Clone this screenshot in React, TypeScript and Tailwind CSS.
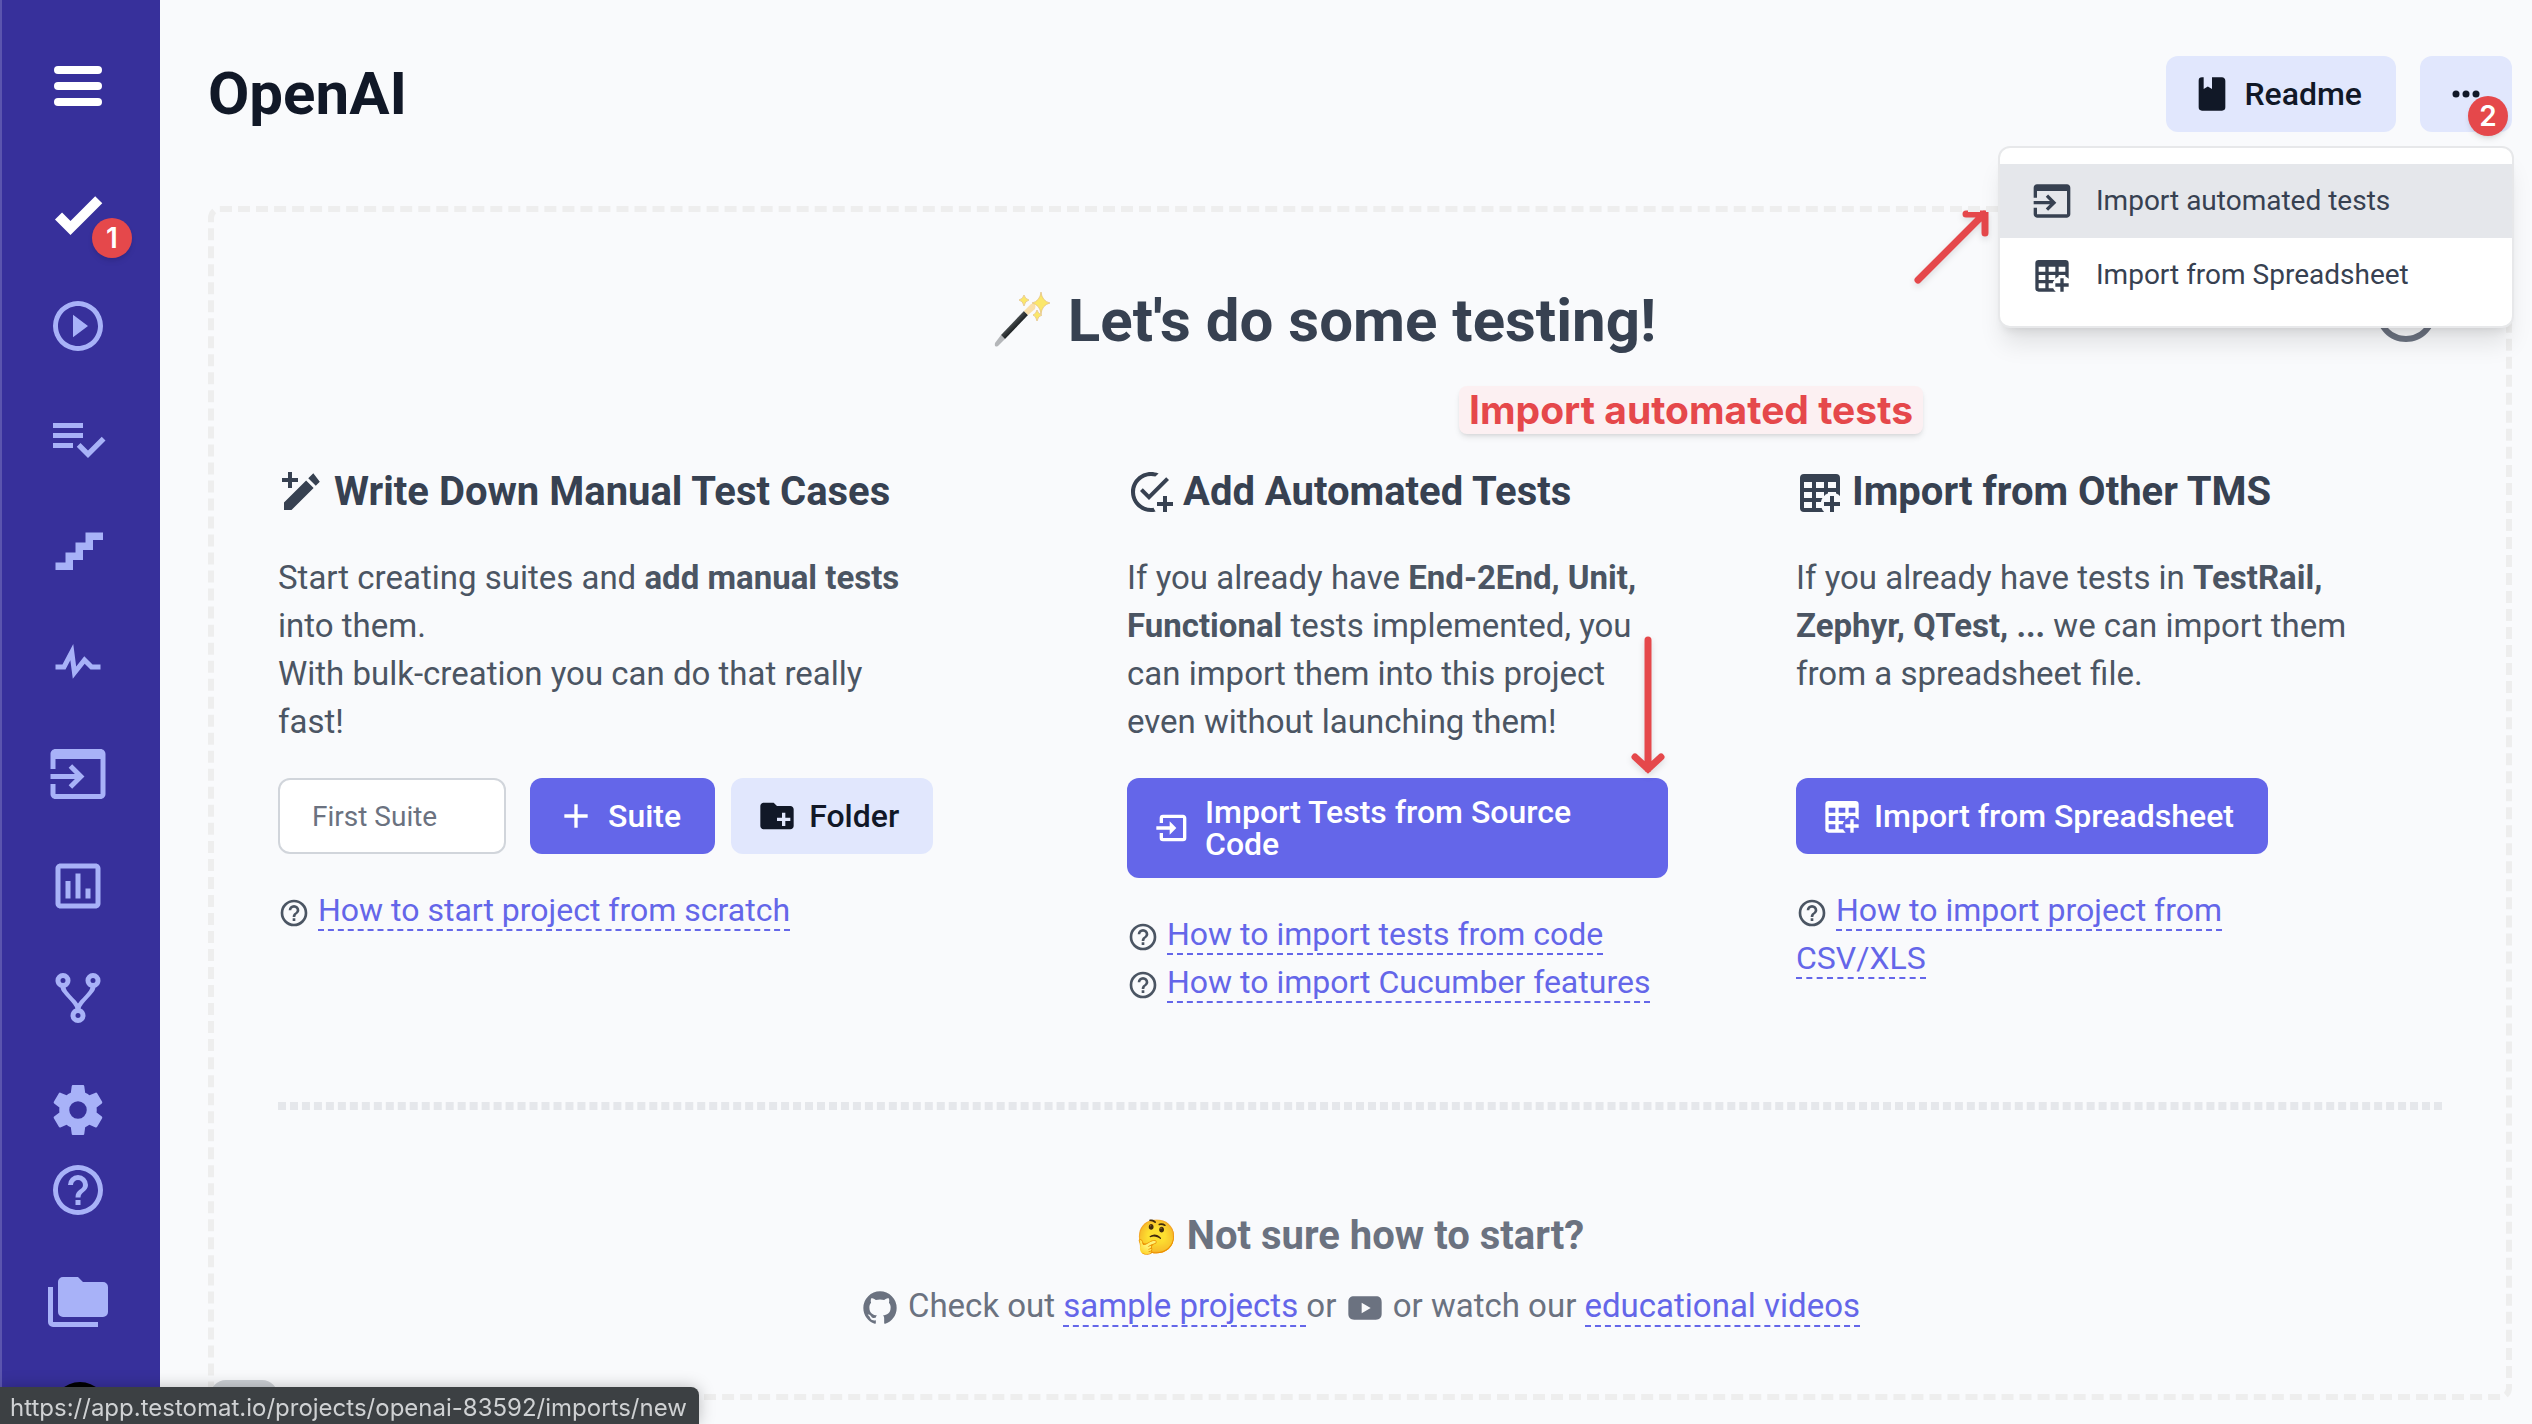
import { useId, type ReactNode } from "react";

const PATHS = {
  check: "M9,20.42L2.79,14.21L5.62,11.38L9,14.77L18.88,4.88L21.71,7.71L9,20.42Z",
  play: "M12,20C7.59,20 4,16.41 4,12C4,7.59 7.59,4 12,4C16.41,4 20,7.59 20,12C20,16.41 16.41,20 12,20M12,2A10,10 0 0,0 2,12A10,10 0 0,0 12,22A10,10 0 0,0 22,12A10,10 0 0,0 12,2M10,16.5L16,12L10,7.5V16.5Z",
  playlist: "M14 10H2V12H14V10M14 6H2V8H14V6M2 16H10V14H2V16M21.5 11.5L23 13L16 20L11.5 15.5L13 14L16 17L21.5 11.5Z",
  stairs: "M15,5V9H11V13H7V17H3V20H10V16H14V12H18V8H22V5H15Z",
  pulse: "M3,13H5.79L10.1,4.79L11.28,13.75L14.5,9.66L17.83,13H21V15H17L14.67,12.67L9.92,18.73L8.94,11.31L7,15H3V13Z",
  appImport: "M1 12H10.76L8.26 9.5L9.67 8.08L14.59 13L9.67 17.92L8.26 16.5L10.76 14H1V12M21 2C22.1 2 23 2.9 23 4V20C23 21.1 22.1 22 21 22H3C1.9 22 1 21.1 1 20V16H3V20H21V6H3V10H1V4C1 2.9 1.9 2 3 2H21Z",
  chart: "M9 17H7V10H9V17M13 17H11V7H13V17M17 17H15V13H17V17M19 19H5V5H19V19M19 3H5C3.9 3 3 3.9 3 5V19C3 20.1 3.9 21 5 21H19C20.1 21 21 20.1 21 19V5C21 3.9 20.1 3 19 3Z",
  fork: "M6,2A3,3 0 0,1 9,5C9,6.28 8.19,7.38 7.06,7.81C7.15,8.27 7.39,8.83 8,9.63C9,10.92 11,12.83 12,14.17C13,12.83 15,10.92 16,9.63C16.61,8.83 16.85,8.27 16.94,7.81C15.81,7.38 15,6.28 15,5A3,3 0 0,1 18,2A3,3 0 0,1 21,5C21,6.32 20.14,7.45 18.95,7.85C18.87,8.37 18.64,9 18,9.83C17,11.17 15,13.08 14,14.38C13.39,15.17 13.15,15.73 13.06,16.19C14.19,16.62 15,17.72 15,19A3,3 0 0,1 12,22A3,3 0 0,1 9,19C9,17.72 9.81,16.62 10.94,16.19C10.85,15.73 10.61,15.17 10,14.38C9,13.08 7,11.17 6,9.83C5.36,9 5.13,8.37 5.05,7.85C3.86,7.45 3,6.32 3,5A3,3 0 0,1 6,2M6,4A1,1 0 0,0 5,5A1,1 0 0,0 6,6A1,1 0 0,0 7,5A1,1 0 0,0 6,4M18,4A1,1 0 0,0 17,5A1,1 0 0,0 18,6A1,1 0 0,0 19,5A1,1 0 0,0 18,4M12,18A1,1 0 0,0 11,19A1,1 0 0,0 12,20A1,1 0 0,0 13,19A1,1 0 0,0 12,18Z",
  cog: "M12,15.5A3.5,3.5 0 0,1 8.5,12A3.5,3.5 0 0,1 12,8.5A3.5,3.5 0 0,1 15.5,12A3.5,3.5 0 0,1 12,15.5M19.43,12.97C19.47,12.65 19.5,12.33 19.5,12C19.5,11.67 19.47,11.34 19.43,11L21.54,9.37C21.73,9.22 21.78,8.95 21.66,8.73L19.66,5.27C19.54,5.05 19.27,4.96 19.05,5.05L16.56,6.05C16.04,5.66 15.5,5.32 14.87,5.07L14.5,2.42C14.46,2.18 14.25,2 14,2H10C9.75,2 9.54,2.18 9.5,2.42L9.13,5.07C8.5,5.32 7.96,5.66 7.44,6.05L4.95,5.05C4.73,4.96 4.46,5.05 4.34,5.27L2.34,8.73C2.21,8.95 2.27,9.22 2.46,9.37L4.57,11C4.53,11.34 4.5,11.67 4.5,12C4.5,12.33 4.53,12.65 4.57,12.97L2.46,14.63C2.27,14.78 2.21,15.05 2.34,15.27L4.34,18.73C4.46,18.95 4.73,19.03 4.95,18.95L7.44,17.94C7.96,18.34 8.5,18.68 9.13,18.93L9.5,21.58C9.54,21.82 9.75,22 10,22H14C14.25,22 14.46,21.82 14.5,21.58L14.87,18.93C15.5,18.67 16.04,18.34 16.56,17.94L19.05,18.95C19.27,19.03 19.54,18.95 19.66,18.73L21.66,15.27C21.78,15.05 21.73,14.78 21.54,14.63L19.43,12.97Z",
  help: "M11,18H13V16H11V18M12,2A10,10 0 0,0 2,12A10,10 0 0,0 12,22A10,10 0 0,0 22,12A10,10 0 0,0 12,2M12,20C7.59,20 4,16.41 4,12C4,7.59 7.59,4 12,4C16.41,4 20,7.59 20,12C20,16.41 16.41,20 12,20M12,6A4,4 0 0,0 8,10H10A2,2 0 0,1 12,8A2,2 0 0,1 14,10C14,12 11,11.75 11,15H13C13,12.75 16,12.5 16,10A4,4 0 0,0 12,6Z",
  folders: "M22,4H14L12,2H6A2,2 0 0,0 4,4V16A2,2 0 0,0 6,18H22A2,2 0 0,0 24,16V6A2,2 0 0,0 22,4M2,6H0V20A2,2 0 0,0 2,22H20V20H2V6Z",
  book: "M18,22A2,2 0 0,0 20,20V4C20,2.89 19.1,2 18,2H12V9L9.5,7.5L7,9V2H6A2,2 0 0,0 4,4V20A2,2 0 0,0 6,22H18Z",
  close: "M12,20C7.59,20 4,16.41 4,12C4,7.59 7.59,4 12,4C16.41,4 20,7.59 20,12C20,16.41 16.41,20 12,20M12,2C6.47,2 2,6.47 2,12C2,17.53 6.47,22 12,22C17.53,22 22,17.53 22,12C22,6.47 17.53,2 12,2M14.59,8L12,10.59L9.41,8L8,9.41L10.59,12L8,14.59L9.41,16L12,13.41L14.59,16L16,14.59L13.41,12L16,9.41L14.59,8Z",
  pencilPlus: "M3 21V17.25L14.06 6.19L17.81 9.94L6.75 21H3ZM20.9 6.85L17.66 2.6L15.13 5.12L18.88 8.87L20.9 6.85ZM10 5H7V2H5V5H2V7H5V10H7V7H10V5Z",
  checkPlus: "M14.3 21.7C13.6 21.9 12.8 22 12 22C6.5 22 2 17.5 2 12S6.5 2 12 2C13.3 2 14.6 2.3 15.8 2.7L14.2 4.3C13.5 4.1 12.8 4 12 4C7.6 4 4 7.6 4 12S7.6 20 12 20C12.4 20 12.9 20 13.3 19.9C13.5 20.6 13.9 21.2 14.3 21.7M7.9 10.1L6.5 11.5L11 16L21 6L19.6 4.6L11 13.2L7.9 10.1M18 14V17H15V19H18V22H20V19H23V17H20V14H18Z",
  plus: "M19,13H13V19H11V13H5V11H11V5H13V11H19V13Z",
  folderPlus: "M4 20C2.9 20 2 19.1 2 18V6C2 4.89 2.89 4 4 4H10L12 6H20C21.1 6 22 6.89 22 8V18C22 19.1 21.1 20 20 20H4M15 10V13H12V15H15V18H17V15H20V13H17V10H15Z",
  enter: "M14,12L10,8V11H2V13H10V16M20,18V6C20,4.89 19.1,4 18,4H6A2,2 0 0,0 4,6V9H6V6H18V18H6V15H4V18A2,2 0 0,0 6,20H18A2,2 0 0,0 20,18Z",
  github: "M12,2A10,10 0 0,0 2,12C2,16.42 4.87,20.17 8.84,21.5C9.34,21.58 9.5,21.27 9.5,21C9.5,20.77 9.5,20.14 9.5,19.31C6.73,19.91 6.14,17.97 6.14,17.97C5.68,16.81 5.03,16.5 5.03,16.5C4.12,15.88 5.1,15.9 5.1,15.9C6.1,15.97 6.63,16.93 6.63,16.93C7.5,18.45 8.97,18 9.54,17.76C9.63,17.11 9.89,16.67 10.17,16.42C7.95,16.17 5.62,15.31 5.62,11.5C5.62,10.39 6,9.5 6.65,8.79C6.55,8.54 6.2,7.5 6.75,6.15C6.75,6.15 7.59,5.88 9.5,7.17C10.29,6.95 11.15,6.84 12,6.84C12.85,6.84 13.71,6.95 14.5,7.17C16.41,5.88 17.25,6.15 17.25,6.15C17.8,7.5 17.45,8.54 17.35,8.79C18,9.5 18.38,10.39 18.38,11.5C18.38,15.32 16.04,16.16 13.81,16.41C14.17,16.72 14.5,17.33 14.5,18.26C14.5,19.6 14.5,20.68 14.5,21C14.5,21.27 14.66,21.59 15.17,21.5C19.14,20.16 22,16.42 22,12A10,10 0 0,0 12,2Z",
  youtube: "M10,15.2L15.4,12L10,8.8V15.2M22,8.5V15.5C22,17.8 20.8,19 18.5,19H5.5C3.2,19 2,17.8 2,15.5V8.5C2,6.2 3.2,5 5.5,5H18.5C20.8,5 22,6.2 22,8.5Z",
};

function Icon({ name, className }: { name: keyof typeof PATHS; className: string }) {
  return (
    <svg viewBox="0 0 24 24" fill="currentColor" fillRule="evenodd" aria-hidden="true" className={className}>
      <path d={PATHS[name]} />
    </svg>
  );
}

function TablePlus({ className }: { className: string }) {
  const id = useId();
  return (
    <svg viewBox="0 0 24 24" fill="currentColor" aria-hidden="true" className={className}>
      <mask id={id}>
        <rect width="24" height="24" fill="white" />
        <circle cx="18" cy="18" r="5.6" fill="black" />
      </mask>
      <path
        mask={`url(#${id})`}
        fillRule="evenodd"
        d="M4,3H20A2,2 0 0,1 22,5V20A2,2 0 0,1 20,22H4A2,2 0 0,1 2,20V5A2,2 0 0,1 4,3M4,7V10H8V7H4M10,7V10H14V7H10M20,10V7H16V10H20M4,12V15H8V12H4M4,20H8V17H4V20M10,12V15H14V12H10M10,20H14V17H10V20M20,20V17H16V20H20M20,12H16V15H20V12Z"
      />
      <path d="M17 14H19V17H22V19H19V22H17V19H14V17H17V14Z" />
    </svg>
  );
}

function Wand() {
  const id = useId();
  return (
    <svg viewBox="0 0 60 60" aria-hidden="true" className="size-[60px] shrink-0">
      <defs>
        <linearGradient id={id} x1="0" y1="0" x2="1" y2="1">
          <stop offset="0.35" stopColor="#5b6062" />
          <stop offset="0.6" stopColor="#15191b" />
        </linearGradient>
      </defs>
      <path d="M3 52L9 44L13 48L6 55Q2 57 3 52Z" fill="#b4b6b9" />
      <path d="M9 44L32 20L36 24L13 48Z" fill={`url(#${id})`} />
      <path d="M32 20L39 13Q45 12 43 18L36 24Z" fill="#fadfa9" />
      <g fill="#fbe76a" stroke="#e3bd7d" strokeWidth="0.7">
        <path d="M49 1Q50 10 58 12Q50 14 49 23Q48 14 40 12Q48 10 49 1Z" />
        <path d="M32 4Q33 8 37 9Q33 10 32 15Q31 10 27 9Q31 8 32 4Z" />
        <path d="M45 19Q46 23 50 24Q46 25 45 30Q44 25 41 24Q44 23 45 19Z" />
      </g>
    </svg>
  );
}

function Badge({ children, className }: { children: ReactNode; className: string }) {
  return (
    <span className={`absolute flex size-10 items-center justify-center rounded-full bg-[#e5484b] font-['Inter',sans-serif] text-[28px] leading-none font-semibold text-white shadow-md ${className}`}>
      {children}
    </span>
  );
}

function Button({ icon, tone, children }: { icon: ReactNode; tone: "solid" | "soft"; children: ReactNode }) {
  const color = tone === "solid" ? "bg-[#6466e9] text-white" : "bg-[#e1e7fd] text-[#111827]";
  return (
    <button type="button" className={`flex min-h-[76px] items-center gap-3 rounded-xl py-[18px] pr-[34px] pl-[26px] text-left text-[32px] leading-8 font-medium ${color}`}>
      {icon}
      <span>{children}</span>
    </button>
  );
}

function Link({ children }: { children: ReactNode }) {
  return (
    <a href="#" className="border-b-2 border-dashed border-[#6466e9] text-[#6466e9]">
      {children}
    </a>
  );
}

function HelpLink({ children }: { children: ReactNode }) {
  return (
    <p className="text-[32px]">
      <Icon name="help" className="mr-2 inline size-8 align-middle" />
      <Link>{children}</Link>
    </p>
  );
}

function Column({ icon, title, text, action, className, children }: { icon: ReactNode; title: string; text: ReactNode; action: ReactNode; className: string; children: ReactNode }) {
  return (
    <section className={`text-[33px] leading-[48px] text-[#4b5563] ${className}`}>
      <h3 className="flex items-center gap-2 text-[40px] leading-[60px] font-bold whitespace-nowrap text-[#374151]">
        {icon}
        {title}
      </h3>
      <p className="mt-8 min-h-48">{text}</p>
      <div className="mt-8 flex">{action}</div>
      <div className="mt-8">{children}</div>
    </section>
  );
}

const NAV: { name: keyof typeof PATHS; label: string }[] = [
  { name: "play", label: "Runs" },
  { name: "playlist", label: "Plans" },
  { name: "stairs", label: "Steps" },
  { name: "pulse", label: "Pulse" },
  { name: "appImport", label: "Imports" },
  { name: "chart", label: "Analytics" },
  { name: "fork", label: "Branches" },
  { name: "cog", label: "Settings" },
];

function Sidebar() {
  return (
    <aside className="sticky top-0 flex h-screen w-40 shrink-0 flex-col items-center overflow-hidden border-l-2 border-[#5b55ae] bg-[#37309b] pt-14 pr-1.5 text-[#a8b2f8]">
      <button type="button" aria-label="Menu" className="text-white">
        <svg viewBox="0 0 60 60" fill="currentColor" aria-hidden="true" className="size-[60px]">
          <rect x="6" y="10" width="48" height="8" rx="4" />
          <rect x="6" y="26" width="48" height="8" rx="4" />
          <rect x="6" y="42" width="48" height="8" rx="4" />
        </svg>
      </button>
      <nav className="mt-[68px] flex shrink-0 flex-col gap-[52px]">
        <a href="#" aria-label="Tests" className="relative text-white">
          <Icon name="check" className="size-[60px]" />
          <Badge className="top-[34px] left-11">1</Badge>
        </a>
        {NAV.map((item) => (
          <a key={item.name} href="#" aria-label={item.label}>
            <Icon name={item.name} className="size-[60px]" />
          </a>
        ))}
      </nav>
      <a href="#" aria-label="Help" className="mt-5">
        <Icon name="help" className="size-[60px]" />
      </a>
      <a href="#" aria-label="Projects" className="mt-[52px]">
        <Icon name="folders" className="size-[60px]" />
      </a>
      <span className="mt-[50px] ml-1 size-14 shrink-0 rounded-full bg-black" />
    </aside>
  );
}

function MoreMenu() {
  return (
    <div className="relative">
      <button type="button" aria-label="More" className="flex h-[76px] w-[92px] items-center justify-center rounded-xl bg-[#e1e7fd] text-[#111827]">
        <svg viewBox="0 0 28 8" fill="currentColor" aria-hidden="true" className="h-2 w-7">
          <circle cx="4" cy="4" r="3.5" />
          <circle cx="14" cy="4" r="3.5" />
          <circle cx="24" cy="4" r="3.5" />
        </svg>
      </button>
      <Badge className="right-1 -bottom-1">2</Badge>
      <div className="absolute top-[90px] -right-0.5 z-10 w-[516px] rounded-xl border-2 border-[#e7e8ea] bg-white pt-4 pb-3.5 text-[28px] text-[#374151] shadow-xl">
        <a href="#" className="flex h-[74px] items-center gap-6 bg-[#e5e7eb] px-8">
          <Icon name="appImport" className="size-10" />
          Import automated tests
        </a>
        <a href="#" className="flex h-[74px] items-center gap-6 px-8">
          <TablePlus className="size-10" />
          Import from Spreadsheet
        </a>
      </div>
      <svg viewBox="0 0 90 90" fill="none" stroke="#e5484b" strokeWidth="7" strokeLinecap="round" strokeLinejoin="miter" aria-hidden="true" className="absolute top-[148px] right-[517px] size-[90px] drop-shadow-md">
        <path d="M13 76L79 10M61 10H80V29" />
      </svg>
    </div>
  );
}

export default function App() {
  return (
    <div className="flex min-h-screen bg-[#f9fafc] font-['Roboto',sans-serif]">
      <Sidebar />
      <main className="min-w-0 flex-1 pt-14 pr-5 pb-6 pl-12">
        <header className="flex items-center gap-6">
          <h1 className="flex-1 text-[60px] leading-[76px] font-bold text-[#111827]">OpenAI</h1>
          <Button tone="soft" icon={<Icon name="book" className="size-10 shrink-0" />}>
            Readme
          </Button>
          <MoreMenu />
        </header>

        <div className="relative mt-[74px] rounded-xl border-6 border-dashed border-[#eeeeee] p-16">
          <div className="flex items-start">
            <h2 className="flex flex-1 items-center justify-center gap-4 text-[60px] leading-[90px] font-bold text-[#374151]">
              <Wand />
              Let's do some testing!
            </h2>
            <button type="button" aria-label="Close" className="text-[#6b7280]">
              <Icon name="close" className="size-[72px]" />
            </button>
          </div>

          <div className="absolute top-[174px] right-[583px] rounded-lg bg-[#fcf0f2] px-2.5 font-['Inter',sans-serif] text-[39px] leading-[48px] font-bold text-[#e5484b] shadow-md">
            Import automated tests
          </div>

          <div className="mt-24 grid grid-cols-[849fr_669fr_646fr]">
            <Column
              className="pr-48"
              icon={<Icon name="pencilPlus" className="size-12 shrink-0" />}
              title="Write Down Manual Test Cases"
              text={
                <>
                  Start creating suites and <b>add manual tests</b> into them.
                  <br />
                  With bulk-creation you can do that really fast!
                </>
              }
              action={
                <>
                  <input aria-label="Suite name" placeholder="First Suite" className="mr-6 h-[76px] w-[228px] min-w-0 rounded-xl border-2 border-[#d1d5db] bg-white px-8 text-[28px] placeholder:text-[#6b7280]" />
                  <div className="flex gap-4">
                    <Button tone="solid" icon={<Icon name="plus" className="size-10 shrink-0" />}>
                      Suite
                    </Button>
                    <Button tone="soft" icon={<Icon name="folderPlus" className="size-10 shrink-0" />}>
                      Folder
                    </Button>
                  </div>
                </>
              }
            >
              <HelpLink>How to start project from scratch</HelpLink>
            </Column>
            <Column
              className="relative pr-32"
              icon={<Icon name="checkPlus" className="size-12 shrink-0" />}
              title="Add Automated Tests"
              text={
                <>
                  If you already have <b>End-2End, Unit, Functional</b> tests implemented, you can import them into this project even without launching them!
                </>
              }
              action={
                <>
                  <Button tone="solid" icon={<Icon name="enter" className="size-10 shrink-0" />}>
                    Import Tests from Source Code
                  </Button>
                  <svg viewBox="0 0 48 148" fill="none" stroke="#e5484b" strokeWidth="7" strokeLinecap="round" strokeLinejoin="miter" aria-hidden="true" className="absolute top-[170px] right-[124px] h-[148px] w-12 drop-shadow-md">
                    <path d="M24 8V137M11 125L24 137L37 125" />
                  </svg>
                </>
              }
            >
              <HelpLink>How to import tests from code</HelpLink>
              <HelpLink>How to import Cucumber features</HelpLink>
            </Column>
            <Column
              className="pr-22"
              icon={<TablePlus className="size-12 shrink-0" />}
              title="Import from Other TMS"
              text={
                <>
                  If you already have tests in <b>TestRail, Zephyr, QTest, ...</b> we can import them from a spreadsheet file.
                </>
              }
              action={
                <Button tone="solid" icon={<TablePlus className="size-10 shrink-0" />}>
                  Import from Spreadsheet
                </Button>
              }
            >
              <HelpLink>How to import project from CSV/XLS</HelpLink>
            </Column>
          </div>

          <div className="mt-24 border-y-4 border-dashed border-[#e5e7eb]" />

          <div className="mt-24 text-center text-[#6b7280]">
            <h3 className="flex items-center justify-center gap-2.5 text-[40px] leading-[60px] font-bold">
              <span className="text-[33px] leading-none">🤔</span>
              Not sure how to start?
            </h3>
            <p className="mt-4 text-[33px] leading-[48px]">
              <Icon name="github" className="mr-2 inline size-10 align-middle" />
              Check out <Link>sample projects </Link>or <Icon name="youtube" className="inline size-10 align-middle" /> or watch our <Link>educational videos</Link>
            </p>
          </div>
        </div>
      </main>
      <div className="fixed bottom-0 left-[210px] h-11 w-[68px] rounded-t-2xl bg-[#cdd1d6]" />
      <div className="fixed bottom-0 left-0 rounded-tr-lg bg-[#3c4043] pt-1 pr-3 pl-2.5 font-['Inter',sans-serif] text-2xl leading-[33px] text-[#cfd1d3] shadow-[0_0_16px_rgba(0,0,0,0.25)]">
        https://app.testomat.io/projects/openai-83592/imports/new
      </div>
    </div>
  );
}
